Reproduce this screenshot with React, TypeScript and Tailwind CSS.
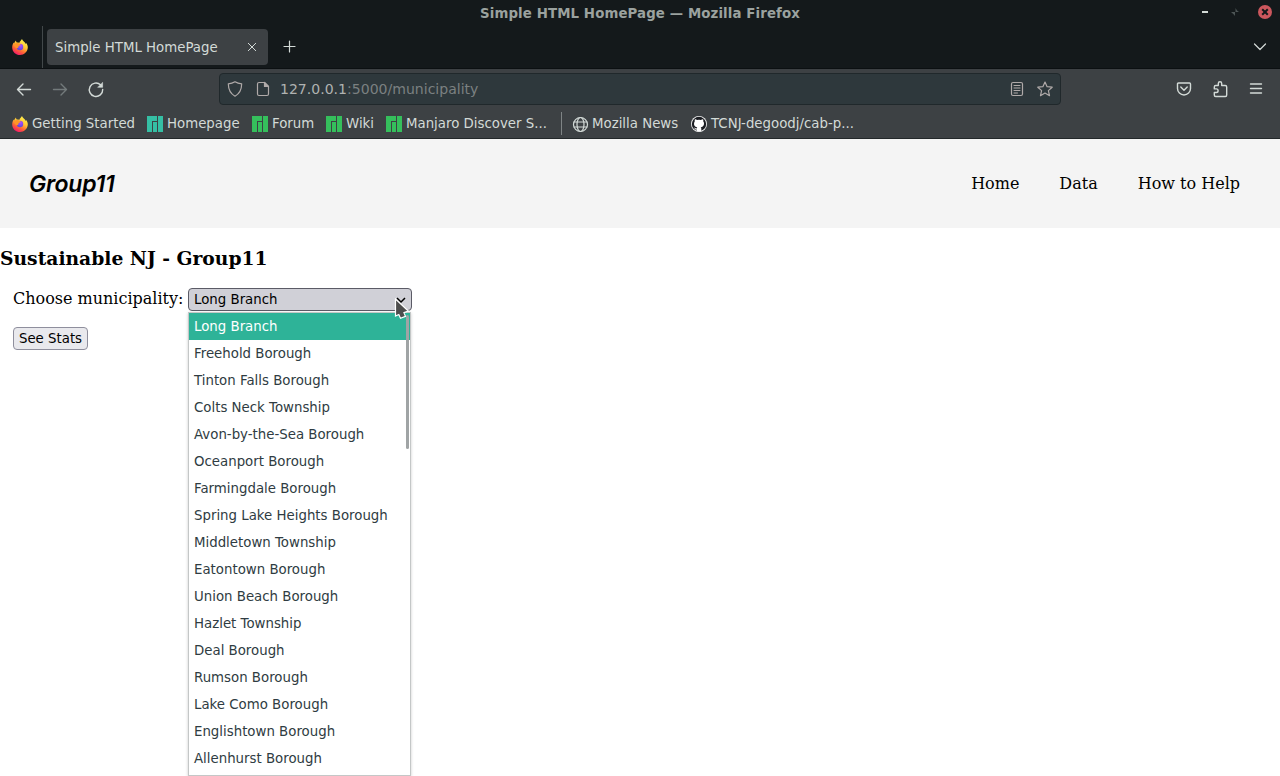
import type { ReactNode } from 'react';

const municipalities = [
  'Long Branch',
  'Freehold Borough',
  'Tinton Falls Borough',
  'Colts Neck Township',
  'Avon-by-the-Sea Borough',
  'Oceanport Borough',
  'Farmingdale Borough',
  'Spring Lake Heights Borough',
  'Middletown Township',
  'Eatontown Borough',
  'Union Beach Borough',
  'Hazlet Township',
  'Deal Borough',
  'Rumson Borough',
  'Lake Como Borough',
  'Englishtown Borough',
  'Allenhurst Borough',
];

function Line({ children, className = '' }: { children: ReactNode; className?: string }) {
  return (
    <svg
      width="16"
      height="16"
      viewBox="0 0 16 16"
      fill="none"
      stroke="currentColor"
      strokeWidth="1.2"
      strokeLinecap="round"
      strokeLinejoin="round"
      className={`shrink-0 ${className}`}
    >
      {children}
    </svg>
  );
}

function FirefoxLogo() {
  return (
    <svg width="16" height="16" viewBox="0 0 16 16" className="shrink-0">
      <defs>
        <linearGradient id="flame" x1="0.8" y1="0.05" x2="0.3" y2="1">
          <stop offset="0" stopColor="#fff44f" />
          <stop offset="0.4" stopColor="#ffc535" />
          <stop offset="0.68" stopColor="#ff6a33" />
          <stop offset="1" stopColor="#f5156c" />
        </linearGradient>
        <radialGradient id="globe" cx="0.6" cy="0.3" r="0.8">
          <stop offset="0" stopColor="#b04bff" />
          <stop offset="1" stopColor="#4b48d6" />
        </radialGradient>
      </defs>
      <path
        fill="url(#flame)"
        d="M10 0c.5 1.5 1.600 2.200 2.600 3.200.6.5.9 1 1 1.700.4-.2.500-.6.500-1C15.300 5.300 15.900 7 15.800 8.500 15.600 12.800 12.200 16 8 16 3.700 16 .2 12.700.2 8.400.2 6.500.8 4.700 1.700 3.400c.100.500.200.900.400 1.200C2.400 3.400 3 2.200 4 1.400c0 1 .3 1.700.8 2.200.9-.2 1.700 0 2.400.3C7.900 2.300 9 1.600 10 0z"
      />
      <circle cx="8" cy="8" r="3.200" fill="url(#globe)" />
      <path fill="#ff9526" d="M2.200 5c1.400-1.200 3.600-1.100 4.800-.6l1.700 1.300c-.2.900-1.400 1-2 1.200-.4.700.1 1.100-.5 1.900-.7.500-1.700.5-2.300 0C2.600 8 2 6.600 2.200 5z" />
    </svg>
  );
}

function ManjaroLogo({ teal = false }: { teal?: boolean }) {
  return (
    <svg width="16" height="16" viewBox="0 0 16 16" className={teal ? 'shrink-0 text-[#35bfa4]' : 'shrink-0 text-[#35bf5c]'}>
      <path fill="currentColor" d="M0 0h10v5H5v11H0zM6 6h4v10H6zM11 0h5v16h-5z" />
    </svg>
  );
}

function GitHubLogo() {
  return (
    <svg width="16" height="16" viewBox="0 0 16 16" className="shrink-0">
      <circle cx="8" cy="8" r="8" fill="#f5f5f5" />
      <circle cx="8" cy="8" r="7.200" fill="#1b1d22" />
      <path fill="#fff" d="M3.900 3.200c1 0 1.600.5 2.200.9a7 7 0 0 1 3.800 0c.6-.4 1.300-.9 2.200-.9.3.8.3 1.500.1 2 .7.8.9 1.800.8 2.700-.1 2.100-1.500 3-3.300 3.300.5.500.6 1 .6 1.700V15c-1.500.7-3 .7-4.600 0v-1.500c-1.300.2-1.700-.3-2.200-1.200l-.8-.7c1.300-.2 1.200 1.200 3 .9 0-.6.200-.9.600-1.300C4.400 10.900 3 10 3 7.900c0-1 .3-1.900.8-2.600-.2-.6-.2-1.300.1-2.100z" />
    </svg>
  );
}

function Bookmark({ icon, label, className }: { icon: ReactNode; label: string; className: string }) {
  return (
    <div className={`flex h-[18px] shrink-0 items-center gap-1 ${className}`}>
      {icon}
      <span className="leading-[18px]">{label}</span>
    </div>
  );
}

function BrowserChrome() {
  return (
    <div className="font-['DejaVu_Sans',sans-serif] text-[14px] text-[#d3dad7]">
      <div className="grid h-[27px] grid-cols-[1fr_auto_1fr] items-center bg-[#14191b]">
        <span />
        <span className="text-[13.333px] leading-[26px] font-bold tracking-[0.11px] text-[#9ba29f]">Simple HTML HomePage — Mozilla Firefox</span>
        <div className="flex items-center justify-end pr-2 pb-[3px]">
          <svg width="6" height="2" className="mr-[23px]"><path fill="#d3dad7" d="M0 0h6v2H0z" /></svg>
          <svg width="8" height="8" viewBox="0 0 8 8" className="mr-[19px]"><path fill="#4d5555" d="M0 4h4v4L2.800 6.500 0 4zM4.500 0v4H8L6 2.500z" /></svg>
          <svg width="14" height="14" viewBox="0 0 14 14">
            <circle cx="7" cy="7" r="7" fill="#cc575d" />
            <path d="M4.200 4.200l5.600 5.600m0-5.600l-5.600 5.600" stroke="#14191b" strokeWidth="2" />
          </svg>
        </div>
      </div>

      <div className="flex h-[42px] items-center border-b border-[#0c1012] bg-[#14191b] pb-[2px]">
        <div className="flex h-[42px] w-[43px] items-center border-r border-[#42484a] pl-3"><FirefoxLogo /></div>
        <div className="ml-1 flex h-9 w-[221px] items-center justify-between rounded bg-[#3d4144] px-2">
          <span className="pt-[2px] text-[13.333px]">Simple HTML HomePage</span>
          <Line><path strokeWidth="1" d="M4.300 4.300l7.400 7.400m0-7.400l-7.400 7.400" /></Line>
        </div>
        <Line className="ml-[14px]"><path d="M7.500 2v11M2 7.500h11" /></Line>
        <Line className="ml-auto mr-3"><path d="M2.500 5L8 10.500 13.500 5" /></Line>
      </div>

      <div className="flex h-10 items-center bg-[#3d4144]">
        <Line className="ml-4"><path strokeWidth="1.400" d="M14.500 8.500H1.500M7 3L1.500 8.500 7 14" /></Line>
        <Line className="ml-5 text-[#737a7b]"><path strokeWidth="1.400" d="M1.500 8.500h13M9 3l5.500 5.500L9 14" /></Line>
        <Line className="ml-5 overflow-visible"><path strokeWidth="1.400" d="M12.500 3.800A6.700 6.700 0 1 0 14.700 8.500" /><path fill="currentColor" strokeWidth=".6" d="M14.600 1.700v4.600H10z" /></Line>
        <div className="ml-[115px] flex h-8 w-[842px] items-center rounded border border-[#20282b] bg-[#2e383c] px-[7px] text-[#b0aaa9]">
          <Line><path d="M8 .8c2 1.300 4 1.900 6.700 2-.1 6.500-2 9.900-6.700 12.400C3.300 12.700 1.400 9.300 1.300 2.800 4 2.700 6 2.100 8 .8z" /></Line>
          <Line className="ml-3"><path d="M4 1.500h5.500l4 4V13c0 1-.5 1.500-1.500 1.500H4c-1 0-1.500-.5-1.500-1.500V3c0-1 .5-1.500 1.500-1.500z" /><path fill="currentColor" d="M9.500 1.500v4h4z" /></Line>
          <span className="ml-[9px] pt-px text-[14.050px] text-[#7b8081]"><span className="text-[#b0b2b1]">127.0.0.1</span>:5000/municipality</span>
          <Line className="ml-auto"><rect x="2.500" y="1.500" width="11" height="13" rx="1.500" /><path strokeWidth="1" d="M5 4.500h6M5 7h6M5 9.500h6M5 12h3.500" /></Line>
          <Line className="ml-3"><path d="M8 1l2.100 4.700 5.100.5-3.800 3.400 1.100 5.100L8 12.100l-4.500 2.600 1.100-5.100L.8 6.200l5.100-.5z" /></Line>
        </div>
        <Line className="ml-[115px]"><path strokeWidth="1.400" d="M2.500 2h11c.7 0 1 .5 1 1v4.500a6.500 6.500 0 0 1-13 0V3c0-.5.3-1 1-1z" /><path strokeWidth="1.400" d="M4.800 6L8 9.200 11.200 6" /></Line>
        <Line className="ml-5 overflow-visible"><path strokeWidth="1.400" d="M6.300 4.500V2.400a1.700 1.700 0 0 1 3.400 0v2.100h3.500c1 0 1.500.5 1.500 1.500v8c0 1-.3 1.500-1.300 1.500H3.700c-1 0-1.400-.5-1.400-1.500v-2.500h2a1.800 1.800 0 0 0 0-3.600h-2V6c0-1 .4-1.500 1.400-1.500z" /></Line>
        <Line className="ml-5"><path strokeWidth="1.400" d="M2.500 3h11M2.500 7.500h11M2.500 12h11" /></Line>
      </div>

      <div className="flex h-[30px] items-center border-b border-[#23282a] bg-[#3d4144] pl-3 text-[13.333px]">
        <Bookmark className="w-[135px]" icon={<FirefoxLogo />} label="Getting Started" />
        <Bookmark className="w-[105px]" icon={<ManjaroLogo teal />} label="Homepage" />
        <Bookmark className="w-[74px]" icon={<ManjaroLogo />} label="Forum" />
        <Bookmark className="w-[60px]" icon={<ManjaroLogo />} label="Wiki" />
        <Bookmark className="w-[175px]" icon={<ManjaroLogo />} label="Manjaro Discover S..." />
        <div className="mr-[10px] h-[23px] w-px bg-[#7f8485]" />
        <Bookmark
          className="w-[119px]"
          icon={<Line className="overflow-visible"><circle cx="8.500" cy="8.500" r="7" /><ellipse cx="8.500" cy="8.500" rx="3.500" ry="7" /><path d="M2 6h13M2 11h13" /></Line>}
          label="Mozilla News"
        />
        <Bookmark className="w-[180px]" icon={<GitHubLogo />} label="TCNJ-degoodj/cab-p..." />
      </div>
    </div>
  );
}

export default function App() {
  return (
    <div className="h-[776px] w-[1280px] overflow-hidden bg-white font-['DejaVu_Serif',serif] text-base text-black">
      <BrowserChrome />
      <header className="flex h-[89px] items-center justify-between bg-[#f4f4f4] pr-10 pl-[29px]">
        <span className="pt-[2px] font-['Inter',sans-serif] text-[23px] font-semibold tracking-[-0.2px] italic">Group11</span>
        <nav className="flex gap-10 leading-6">
          <a>Home</a>
          <a>Data</a>
          <a>How to Help</a>
        </nav>
      </header>
      <main>
        <h1 className="pt-[18px] text-[18.720px] leading-6 font-bold">Sustainable NJ - Group11</h1>
        <div className="mt-[18px] flex h-[23px] items-center pl-[13px]">
          <label className="w-[175px] shrink-0 pb-[2px] leading-6">Choose municipality:</label>
          <div className="relative h-[23px] w-[224px] font-['DejaVu_Sans',sans-serif] text-[13.333px]">
            <div className="flex h-full items-center rounded border border-[#5b5b66] bg-[#d0d0d7] pl-[5px] leading-[19px]">Long Branch</div>
            <svg className="absolute top-[9px] left-[208px]" width="10" height="6" viewBox="0 0 10 6" fill="none" stroke="#000" strokeWidth="1.500"><path d="M1 1l4 4 4-4" /></svg>
            <ul className="absolute top-6 left-0 h-[464px] w-[223px] border border-[#c4c7c7] bg-white text-[#2f3c42] shadow-[0_1px_3px_rgba(0,0,0,0.2)]">
              {municipalities.map((name, index) => (
                <li key={name} className={index === 0 ? 'h-[27px] bg-[#2eb398] pl-[5px] leading-[27px] text-white' : 'h-[27px] pl-[5px] leading-[27px]'}>
                  {name}
                </li>
              ))}
            </ul>
            <div className="absolute top-[27px] left-[218px] h-[134px] w-[3px] rounded-full bg-[#a0a4a5]" />
            <svg className="absolute top-[10px] left-[206px]" width="16" height="22" viewBox="0 0 16 22">
              <path d="M1.500 1v17l3.300-1.500 1.700 3.800 5-2-1.600-3.600 4.400-1.700z" fill="#4d4d4d" stroke="#fff" strokeWidth="1.200" />
            </svg>
          </div>
        </div>
        <button className="mt-4 ml-[13px] block h-[23px] w-[75px] rounded border border-[#8f8f9d] bg-[#e9e9ed] font-['DejaVu_Sans',sans-serif] text-[13.333px] leading-[19px]">See Stats</button>
      </main>
    </div>
  );
}
